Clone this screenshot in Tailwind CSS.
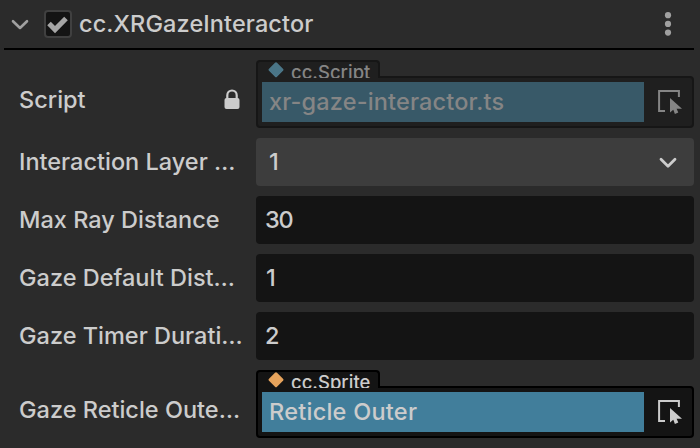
<!DOCTYPE html>
<html lang="en">
<head>
<meta charset="utf-8">
<title>cc.XRGazeInteractor</title>
<script src="https://cdn.jsdelivr.net/npm/@tailwindcss/browser@4"></script>
</head>
<body class="w-[700px] h-[448px] overflow-hidden bg-[#2b2b2b] text-[#cccccc] font-['Inter',sans-serif] font-[450] text-[23.5px] leading-[30px] whitespace-nowrap">
<header class="ml-1 mr-1.5 h-[50px] border-b-2 border-black flex items-center">
  <svg class="ml-[6px] w-5 h-5 shrink-0" viewBox="0 0 20 20" fill="none" stroke="#a0a0a0" stroke-width="2.6" stroke-linecap="round" stroke-linejoin="round"><path d="M3 7.2 10 14l7-6.8"/></svg>
  <span class="ml-[14px] w-7 h-7 rounded-[4px] border-2 border-[#404040] bg-[#141414] shrink-0">
    <svg class="w-6 h-6" viewBox="0 0 24 24" fill="none" stroke="#a6a6a6" stroke-width="5"><path d="M3 11.6 9 17.6 20 6.4"/></svg>
  </span>
  <h1 class="ml-[7px] font-[450] tracking-[0.1px]">cc.XRGazeInteractor</h1>
  <svg class="ml-auto mr-[16px] w-5 h-7 shrink-0" viewBox="0 0 20 28" fill="#a0a0a0"><circle cx="10" cy="5.2" r="3.1"/><circle cx="10" cy="13.9" r="3.1"/><circle cx="10" cy="22.6" r="3.1"/></svg>
</header>
<main class="pt-[10px] pl-[19px] pr-1.5 flex flex-col gap-[10px]">
  <div class="h-[68px] flex">
    <div class="w-[237px] pt-3 pr-4 flex items-center justify-between">
      <span>Script</span>
      <svg class="w-[16px] h-[20px] mb-[2px]" viewBox="0 0 16 20"><path d="M3.3 10V6.2a4.7 4.7 0 0 1 9.4 0V10" fill="none" stroke="#cccccc" stroke-width="2.2"/><rect x="0.5" y="9" width="15" height="11" rx="2" fill="#cccccc"/></svg>
    </div>
    <div class="flex-1 flex flex-col">
      <div class="relative z-10 w-[124px] h-[18px] rounded-t-[4px] border-2 border-b-0 border-[#161616] bg-[#1f1f1f] overflow-hidden flex items-start">
        <svg class="ml-[10px] w-4 h-4 shrink-0" viewBox="0 0 16 16" fill="#4a7587"><path d="M7 .8q1-1 2 0l6 6q1 1 0 2l-6 6q-1 1-2 0l-6-6q-1-1 0-2z"/></svg>
        <span class="ml-[7px] -mt-[3px] text-[18.5px] leading-[26px] text-[#858585]">cc.Script</span>
      </div>
      <div class="-mt-[2px] h-[52px] border-2 border-[#161616] rounded-[4px] rounded-tl-none bg-[#1f1f1f] p-1 flex">
        <div class="w-[382px] h-10 bg-[#385968] pl-[7px] flex items-center text-[#858585] tracking-[0.15px]">xr-gaze-interactor.ts</div>
        <svg class="ml-[12px] mt-1.5 w-7 h-7 shrink-0" viewBox="0 0 28 28"><path d="M9 22.9H3.1V3.1h19.8V9" fill="none" stroke="#858585" stroke-width="2"/><path d="M14 10v14.6l3.3-2.8 1.6 4.2 3.4-1.4-1.7-3.8H26z" fill="#858585"/></svg>
      </div>
    </div>
  </div>
  <div class="h-12 flex items-center">
    <span class="w-[237px]">Interaction Layer …</span>
    <div class="flex-1 h-12 rounded-[4px] bg-[#3d3d3d] pl-[13px] pr-4 flex items-center justify-between">1
      <svg class="w-5 h-5" viewBox="0 0 20 20" fill="none" stroke="#cccccc" stroke-width="2.8" stroke-linecap="round" stroke-linejoin="round"><path d="m3 7.2 7 7 7-7"/></svg>
    </div>
  </div>
  <div class="h-12 flex items-center">
    <span class="w-[237px]">Max Ray Distance</span>
    <div class="flex-1 h-12 rounded-[4px] bg-[#141414] pl-[9px] flex items-center tracking-[-1.2px]">30</div>
  </div>
  <div class="h-12 flex items-center">
    <span class="w-[237px]">Gaze Default Dist…</span>
    <div class="flex-1 h-12 rounded-[4px] bg-[#141414] pl-[10px] flex items-center">1</div>
  </div>
  <div class="h-12 flex items-center">
    <span class="w-[237px]">Gaze Timer Durati…</span>
    <div class="flex-1 h-12 rounded-[4px] bg-[#141414] pl-[9px] flex items-center">2</div>
  </div>
  <div class="h-[68px] flex">
    <div class="w-[237px] pt-3 flex items-center"><span>Gaze Reticle Oute…</span></div>
    <div class="flex-1 flex flex-col">
      <div class="relative z-10 w-[124px] h-[18px] rounded-t-[4px] border-2 border-b-0 border-black bg-[#141414] overflow-hidden flex items-start">
        <svg class="ml-[10px] w-4 h-4 shrink-0" viewBox="0 0 16 16" fill="#e6a35c"><path d="M7 .8q1-1 2 0l6 6q1 1 0 2l-6 6q-1 1-2 0l-6-6q-1-1 0-2z"/></svg>
        <span class="ml-[7px] -mt-[3px] text-[18.5px] leading-[26px]">cc.Sprite</span>
      </div>
      <div class="-mt-[2px] h-[52px] border-2 border-black rounded-[4px] rounded-tl-none bg-[#141414] p-1 flex">
        <div class="w-[382px] h-10 bg-[#417e9b] pl-[7px] flex items-center tracking-[0.25px]">Reticle Outer</div>
        <svg class="ml-[12px] mt-1.5 w-7 h-7 shrink-0" viewBox="0 0 28 28"><path d="M9 22.9H3.1V3.1h19.8V9" fill="none" stroke="#cccccc" stroke-width="2"/><path d="M14 10v14.6l3.3-2.8 1.6 4.2 3.4-1.4-1.7-3.8H26z" fill="#cccccc"/></svg>
      </div>
    </div>
  </div>
</main>
</body>
</html>
